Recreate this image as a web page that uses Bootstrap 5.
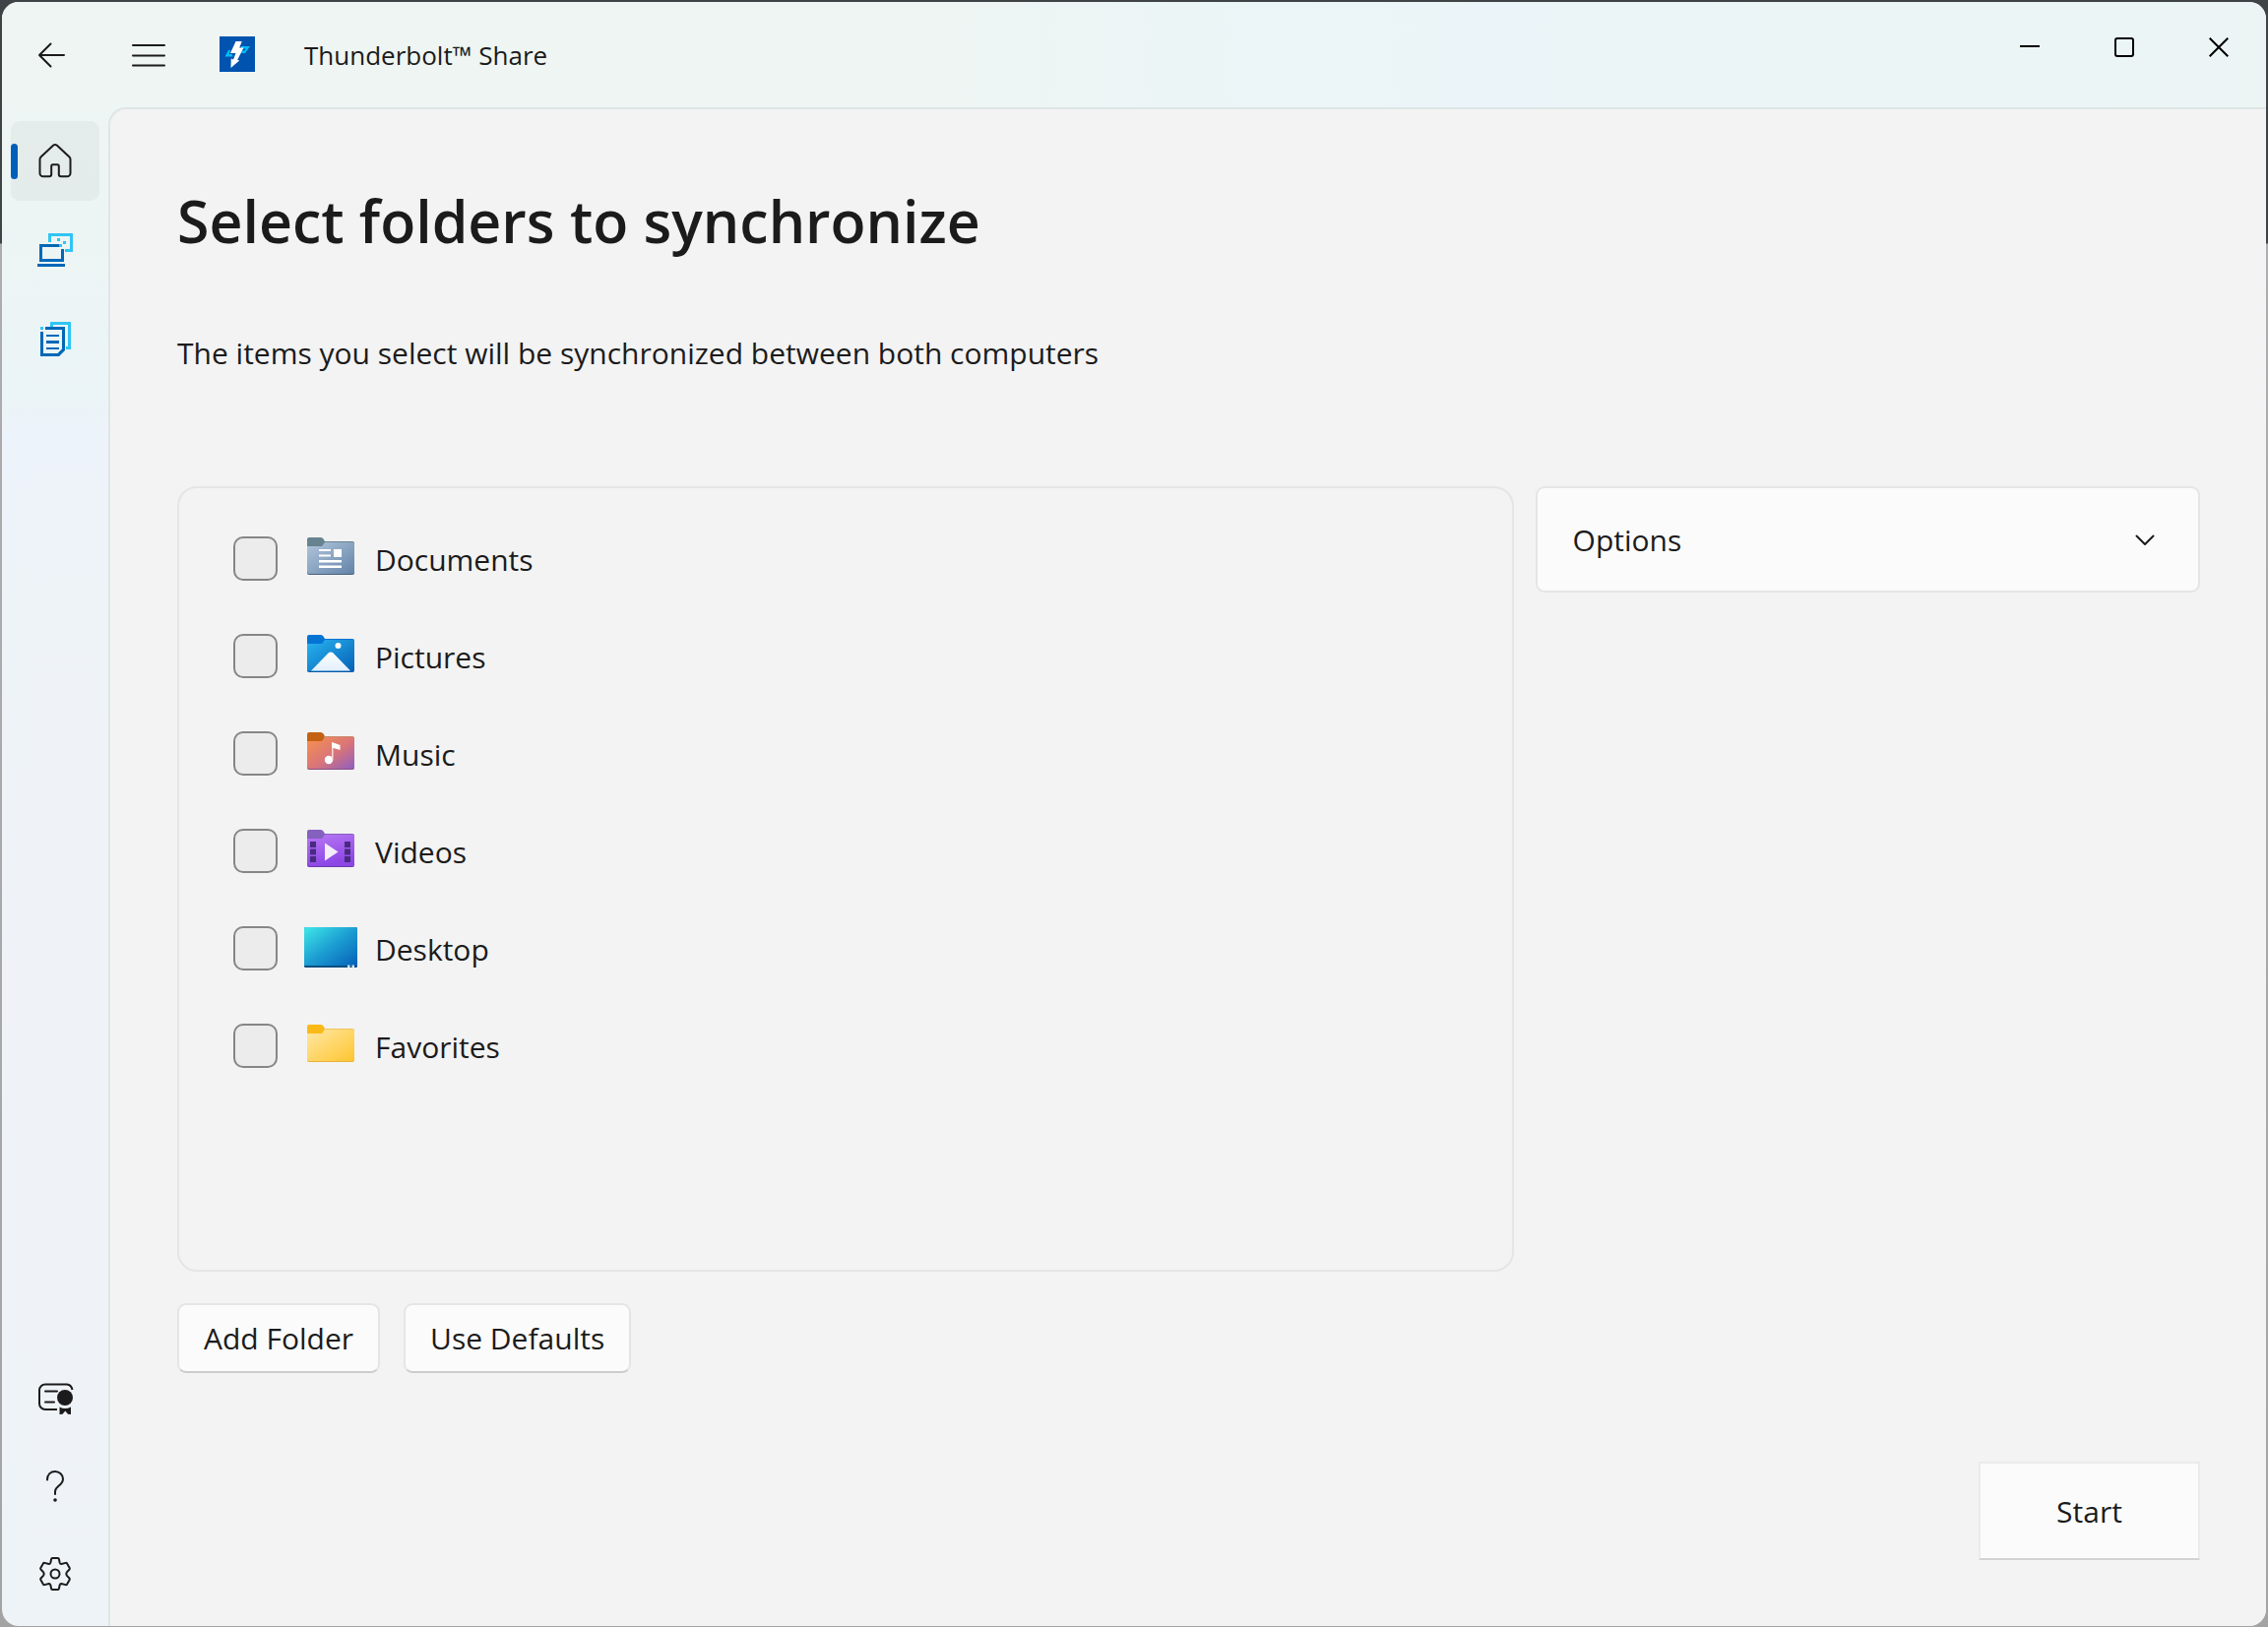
<!DOCTYPE html>
<html lang="en">
<head>
<meta charset="utf-8">
<meta name="viewport" content="width=device-width, initial-scale=1">
<title>Thunderbolt™ Share</title>
<link href="https://cdn.jsdelivr.net/npm/bootstrap@5.3.0/dist/css/bootstrap.min.css" rel="stylesheet">
<style>
  body { font-family: "Open Sans", "Noto Sans", sans-serif; font-size: 30px; line-height: 40px; color: #1b1b1b; padding: 2px 2px 1px; background: linear-gradient(#404345 0, #404345 247px, #adadaf 248px, #a3a3a4 100%); }
  button { color: inherit; }
  .app-window { border-radius: 17px; background: linear-gradient(#eef5f3 0, #edf5f4 240px, #ebf4f7 400px, #edf3fa 440px, #eef3f8 600px, #eff3f8 1000px, #eef3f8 100%); }
  .title-bar { height: 107px; padding-left: 10px; background: linear-gradient(90deg, #eef5f3 0, #eff5f2 30%, #eef5f3 42%, #ecf5f6 52%, #ebf4f8 66%, #ebf5f6 80%, #ecf5f4 100%); }
  .bar-btn { width: 80px; height: 72px; }
  .menu-btn { margin-left: 19px; }
  .app-logo { margin: 0 0 2px 32px; }
  .app-name { margin-left: 50px; font-size: 26px; line-height: 36px; }
  .caption-btn { width: 96px; height: 92px; }
  .rail { width: 108px; padding: 14px 9px 13px; }
  .rail-top { gap: 10px; }
  .rail-bottom { gap: 8px; }
  .rail-btn { width: 90px; height: 81px; padding: 0; border-radius: 9px; }
  .rail-top .rail-btn { padding-bottom: 2px; }
  .rail-btn.active { background: rgba(0,0,0,.035); }
  .rail-btn.active::before { content: ""; position: absolute; left: 0; top: 23px; width: 7px; height: 36px; border-radius: 4px; background: #005fb8; }
  .page { background: #f3f3f3; border: solid #dfe5e6; border-width: 2px 0 0 2px; border-top-left-radius: 18px; padding: 73px 67px 67px 68px; }
  h1 { font-size: 59px; line-height: 80px; font-weight: 600; margin: 0 0 75px; }
  .intro { margin: 0 0 115px; }
  .columns { display: grid; grid-template-columns: 201fr 100fr; gap: 22px; }
  .folder-list { border: 2px solid #e5e5e5; border-radius: 20px; padding: 22px 55px; }
  .folder-row { height: 99px; }
  .folder-row .form-check-input { width: 45px; height: 45px; margin: 0 27px 0 0; border: 2px solid #868686; border-radius: 10px; background-color: #ececec; }
  .folder-row .form-check-input:checked { background-color: #005fb8; }
  .folder-row label { padding-top: 2px; }
  .folder-row svg { margin: 0 18px 4px 0; }
  .options-btn { height: 108px; padding: 2px 44px 0 36px; border: 2px solid #e5e5e5; border-radius: 9px; background: #fbfbfb; }
  .push-btn { height: 71px; padding: 0 25px; border: 2px solid #e5e5e5; border-bottom-color: #cccccc; border-radius: 9px; background: #fbfbfb; }
  .actions { margin-top: 32px; gap: 24px; }
  .start-btn { width: 225px; height: 100px; margin-top: 90px; padding: 2px 0 0; background: #fbfbfb; border: 2px solid #ebebeb; border-bottom-color: #d2d2d2; }
</style>
<script src="https://cdn.jsdelivr.net/npm/bootstrap@5.3.0/dist/js/bootstrap.bundle.min.js"></script>
</head>
<body class="vh-100 d-flex">
<div class="app-window flex-grow-1 d-flex flex-column overflow-hidden">
  <header class="title-bar d-flex align-items-center flex-shrink-0">
    <button class="bar-btn border-0 bg-transparent p-0 d-flex align-items-center justify-content-center" type="button" aria-label="Back">
      <svg width="28" height="26" viewBox="0 0 28 26" fill="none" stroke="#1b1b1b" stroke-width="2" stroke-linecap="round" stroke-linejoin="round"><path d="M27 13H2M13.500 1.500 2 13l11.500 11.500"/></svg>
    </button>
    <button class="menu-btn bar-btn border-0 bg-transparent p-0 d-flex align-items-center justify-content-center" type="button" aria-label="Menu">
      <svg width="34" height="24" viewBox="0 0 34 24" fill="none" stroke="#1b1b1b" stroke-width="2" stroke-linecap="round"><path d="M1 2h32M1 12.500h32M1 22.500h32"/></svg>
    </button>
    <svg class="app-logo" width="36" height="36" viewBox="0 0 36 36"><path fill="#0054b0" d="M0 0h36v36H0z"/><path fill="#00bdf7" d="M9 14l-3.500 6.500h8l-.8-2.600H9.600l1.600-4zM22 10h9l-5 7h-4l1-2.500h2.400l1.300-1.900H22z"/><path fill="#fff" d="M16.500 5h6.300l-2.600 6.500h4.300l-6.300 12.300 2 .8L11.500 32l.3-9.500 2.200 1 2.500-6.500H11z"/></svg>
    <div class="app-name">Thunderbolt™ Share</div>
    <div class="ms-auto d-flex align-self-start">
      <button class="caption-btn border-0 bg-transparent p-0 d-flex align-items-center justify-content-center" type="button" aria-label="Minimize"><svg width="20" height="20"><path fill="#000" d="M0 8h20v2H0z"/></svg></button>
      <button class="caption-btn border-0 bg-transparent p-0 d-flex align-items-center justify-content-center" type="button" aria-label="Maximize"><svg width="20" height="20"><rect x="1" y="1" width="18" height="18" rx="2" fill="none" stroke="#000" stroke-width="2"/></svg></button>
      <button class="caption-btn border-0 bg-transparent p-0 d-flex align-items-center justify-content-center" type="button" aria-label="Close"><svg width="20" height="20"><path d="M.7.700l18.600 18.600M19.300.700.700 19.300" stroke="#000" stroke-width="2"/></svg></button>
    </div>
  </header>
  <div class="d-flex flex-grow-1">
    <nav class="rail d-flex flex-column justify-content-between flex-shrink-0" aria-label="Main">
      <div class="rail-top d-flex flex-column">
        <button class="rail-btn active position-relative border-0 d-flex align-items-center justify-content-center" type="button" aria-label="Home">
          <svg width="34" height="36" viewBox="0 0 34 36" fill="none" stroke="#1b1b1b" stroke-width="2" stroke-linejoin="round"><path d="M15.300 2.600a2.400 2.400 0 0 1 3.400 0L31.500 14.500q1 1 1 2.400V31a3.300 3.300 0 0 1-3.300 3.300H23a2.200 2.200 0 0 1-2.200-2.200V23.700a1.500 1.500 0 0 0-1.500-1.500h-4.600a1.500 1.500 0 0 0-1.500 1.500v8.400A2.200 2.200 0 0 1 11 34.300H4.800A3.300 3.300 0 0 1 1.500 31V16.900q0-1.400 1-2.400z"/></svg>
        </button>
        <button class="rail-btn border-0 bg-transparent d-flex align-items-center justify-content-center" type="button" aria-label="Screen share">
          <svg width="36" height="36" viewBox="0 0 36 36"><path fill="#2fc5f4" d="M11 1h25v19h-8v-3h5V4H14v6h-3zM20 6h3v3h-3zM26 9h3v3h-3zM22 12h3v3h-3z"/><path fill="#0068b8" fill-rule="evenodd" d="M2 12h20v3H5v12h19V17h3v13H2zM0 32h28v3H0z"/></svg>
        </button>
        <button class="rail-btn border-0 bg-transparent d-flex align-items-center justify-content-center" type="button" aria-label="File transfer">
          <svg width="32" height="36" viewBox="0 0 32 36"><path fill="#2fc5f4" d="M11 0h21v28h-5v-3h2V3H14v2h-3zM1 5h3v3H1z"/><path fill="#0068b8" d="M6 5h20v24l-6 6H1V10h3v22h14.500l4.500-4.500V8H6z"/><path fill="#0068b8" d="M7 13h13v2H7zM7 19h13v3H7zM7 26h13v2H7z"/></svg>
        </button>
      </div>
      <div class="rail-bottom d-flex flex-column">
        <button class="rail-btn border-0 bg-transparent d-flex align-items-center justify-content-center" type="button" aria-label="License">
          <svg width="37" height="32" viewBox="0 0 37 32" fill="none" stroke="#1b1b1b" stroke-width="2"><path d="M20 27H8a6 6 0 0 1-6-6V7.500A6 6 0 0 1 8 1.500h22q4.500.500 5.500 5.500"/><path d="M8 8.500h12M8 19.500h9" stroke-linecap="round"/><circle cx="28" cy="15" r="8" fill="#1b1b1b" stroke="none"/><path fill="#1b1b1b" stroke="none" d="M22.500 24.500q5.500 3 11.500 0V32l-3-.3-2.700-3.200-2.800 3.200-3 .3z"/></svg>
        </button>
        <button class="rail-btn border-0 bg-transparent d-flex align-items-center justify-content-center" type="button" aria-label="Help">
          <svg width="20" height="34" viewBox="0 0 20 34"><path fill="none" stroke="#1b1b1b" stroke-width="2" stroke-linecap="round" d="M2 10.500C2 5 5.500 2 10 2s8 3.500 8 7.500c0 7-8 7-8 13V25"/><circle cx="10" cy="31" r="1.800" fill="#1b1b1b"/></svg>
        </button>
        <button class="rail-btn border-0 bg-transparent d-flex align-items-center justify-content-center" type="button" aria-label="Settings">
          <svg width="34" height="36" viewBox="0 0 34 36" fill="none" stroke="#1b1b1b" stroke-width="2" stroke-linejoin="round"><path d="M14.200 2h5.600q.9 0 1.100 1l.8 3.700q.4 1.200 1.600 1.300l4.500-1.100q.8-.2 1.300.5l2.600 4.700q.4.700-.2 1.400l-2.700 2.900q-1 1.600 0 3.200l2.700 2.900q.6.700.2 1.400l-2.600 4.700q-.5.700-1.300.5L23.300 28q-1.200.1-1.600 1.300l-.8 3.700q-.2 1-1.100 1h-5.600q-.9 0-1.100-1l-.8-3.700q-.4-1.200-1.600-1.300l-4.500 1.100q-.8.200-1.300-.5l-2.600-4.700q-.4-.7.200-1.400l2.700-2.900q1-1.600 0-3.200l-2.700-2.900q-.6-.7-.2-1.400l2.600-4.700q.5-.7 1.300-.5L10.700 8q1.200-.1 1.600-1.300l.8-3.700q.2-1 1.100-1z"/><circle cx="17" cy="18" r="4.500"/></svg>
        </button>
      </div>
    </nav>
    <main class="page flex-grow-1 d-flex flex-column">
      <h1>Select folders to synchronize</h1>
      <p class="intro">The items you select will be synchronized between both computers</p>
      <div class="columns flex-grow-1">
        <div class="folder-list">
          <div class="folder-row d-flex align-items-center">
            <input class="form-check-input" type="checkbox" id="f-documents">
            <label class="d-flex align-items-center" for="f-documents">
              <svg width="54" height="48" viewBox="0 0 54 48"><defs><linearGradient id="g-doc" x2="1" y2="1"><stop stop-color="#b3c6dc"/><stop offset="1" stop-color="#6283a8"/></linearGradient></defs><path fill="#66838f" d="M3 13V5q0-2 2-2h12q1.500 0 2.500 1.500L21 7h28q2 0 2 2v4z"/><path fill="#46617f" d="M3 30h48v9q0 2-2 2H5q-2 0-2-2z"/><path fill="url(#g-doc)" d="M3 12h15l3-4h28q2 0 2 2v28q0 2-2 2H5q-2 0-2-2z"/><path fill="#fff" d="M15 15h12v2H15zM15 20.500h12v2H15zM15 26h23v2.500H15zM15 31.500h23V34H15zM30 15h8v8h-8z"/></svg>
              Documents</label>
          </div>
          <div class="folder-row d-flex align-items-center">
            <input class="form-check-input" type="checkbox" id="f-pictures">
            <label class="d-flex align-items-center" for="f-pictures">
              <svg width="54" height="48" viewBox="0 0 54 48"><defs><linearGradient id="g-pic" x2="1" y2="1"><stop stop-color="#28b4f0"/><stop offset="1" stop-color="#0560b6"/></linearGradient><linearGradient id="g-mt" x2="0" y2="1"><stop stop-color="#fff"/><stop offset="1" stop-color="#e0effc"/></linearGradient></defs><path fill="#0474d4" d="M3 13V5q0-2 2-2h12q1.500 0 2.500 1.500L21 7h28q2 0 2 2v4z"/><path fill="#0a58a6" d="M3 30h48v9q0 2-2 2H5q-2 0-2-2z"/><path fill="url(#g-pic)" d="M3 12h15l3-4h28q2 0 2 2v28q0 2-2 2H5q-2 0-2-2z"/><path fill="url(#g-mt)" d="M7 39.500 24.500 21.500q2.500-2 5 0L47 39.500z"/><circle cx="34.500" cy="14" r="3" fill="#fff"/></svg>
              Pictures</label>
          </div>
          <div class="folder-row d-flex align-items-center">
            <input class="form-check-input" type="checkbox" id="f-music">
            <label class="d-flex align-items-center" for="f-music">
              <svg width="54" height="48" viewBox="0 0 54 48"><defs><linearGradient id="g-mus" x2="1" y2="1"><stop stop-color="#f9924c"/><stop offset=".55" stop-color="#d8747a"/><stop offset="1" stop-color="#8d5fc0"/></linearGradient></defs><path fill="#c26212" d="M3 13V5q0-2 2-2h12q1.500 0 2.500 1.500L21 7h20v6z"/><path fill="#c8866a" d="M20 7h29q2 0 2 2v4H20z"/><path fill="#8a4f86" d="M3 30h48v9q0 2-2 2H5q-2 0-2-2z"/><path fill="url(#g-mus)" d="M3 12h15l3-4h28q2 0 2 2v28q0 2-2 2H5q-2 0-2-2z"/><circle cx="25" cy="31" r="4.200" fill="#fff"/><path fill="#f6dcdc" d="M28 14h1.500v17H28z"/><path fill="#fff" d="M28 13q4.500 1.500 8.500 3v5L28 18.500z"/></svg>
              Music</label>
          </div>
          <div class="folder-row d-flex align-items-center">
            <input class="form-check-input" type="checkbox" id="f-videos">
            <label class="d-flex align-items-center" for="f-videos">
              <svg width="54" height="48" viewBox="0 0 54 48"><defs><linearGradient id="g-vid" x2=".3" y2="1"><stop stop-color="#b878f4"/><stop offset="1" stop-color="#8c46e4"/></linearGradient></defs><path fill="#8460bf" d="M3 13V5q0-2 2-2h12q1.500 0 2.500 1.500L21 7h28q2 0 2 2v4z"/><path fill="#6f3bb0" d="M3 30h48v9q0 2-2 2H5q-2 0-2-2z"/><path fill="url(#g-vid)" d="M3 12h15l3-4h28q2 0 2 2v28q0 2-2 2H5q-2 0-2-2z"/><path fill="#4a2a80" d="M6 15h6v6H6zM6 22.500h6v6H6zM6 30h6v6H6zM41 15h6v6h-6zM41 22.500h6v6h-6zM41 30h6v6h-6z"/><path fill="#f4eefb" d="M21 16.500 34.500 25.500 21 34.500z"/></svg>
              Videos</label>
          </div>
          <div class="folder-row d-flex align-items-center">
            <input class="form-check-input" type="checkbox" id="f-desktop">
            <label class="d-flex align-items-center" for="f-desktop">
              <svg width="54" height="48" viewBox="0 0 54 48"><defs><linearGradient id="g-desk" x2="1" y2="1"><stop stop-color="#3fe8e8"/><stop offset=".5" stop-color="#1c9ed2"/><stop offset="1" stop-color="#0560b8"/></linearGradient></defs><rect y="3" width="54" height="41" rx="1.500" fill="#0b4f80"/><path fill="url(#g-desk)" d="M0 4.500Q0 3 1.500 3h51Q54 3 54 4.500V42H0z"/><path fill="#cfe6f5" d="M44 41.500h2.500V44H44zM48.500 41.500H51V44h-2.500z"/></svg>
              Desktop</label>
          </div>
          <div class="folder-row d-flex align-items-center">
            <input class="form-check-input" type="checkbox" id="f-favorites">
            <label class="d-flex align-items-center" for="f-favorites">
              <svg width="54" height="48" viewBox="0 0 54 48"><defs><linearGradient id="g-fav" x2="1" y2="1"><stop stop-color="#ffe8a4"/><stop offset="1" stop-color="#fec530"/></linearGradient></defs><path fill="#fbb917" d="M3 13V5q0-2 2-2h12q1.500 0 2.500 1.500L21 7h20v6z"/><path fill="#efc45c" d="M20 7h29q2 0 2 2v4H20z"/><path fill="#e8b23c" d="M3 30h48v9q0 2-2 2H5q-2 0-2-2z"/><path fill="url(#g-fav)" d="M3 12h15l3-4h28q2 0 2 2v28q0 2-2 2H5q-2 0-2-2z"/></svg>
              Favorites</label>
          </div>
        </div>
        <div>
          <button class="options-btn w-100 d-flex align-items-center justify-content-between" type="button" aria-expanded="false">
            Options
            <svg width="20" height="12" viewBox="0 0 20 12" fill="none" stroke="#1b1b1b" stroke-width="2" stroke-linecap="round" stroke-linejoin="round"><path d="M1.500 1.500 10 10l8.500-8.500"/></svg>
          </button>
        </div>
      </div>
      <div class="actions d-flex">
        <button class="push-btn" type="button">Add Folder</button>
        <button class="push-btn" type="button">Use Defaults</button>
      </div>
      <button class="start-btn align-self-end" type="button">Start</button>
    </main>
  </div>
</div>
</body>
</html>
